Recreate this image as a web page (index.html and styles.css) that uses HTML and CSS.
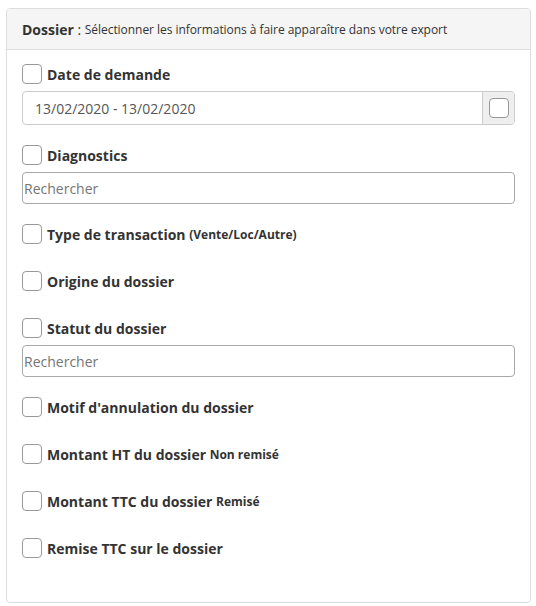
FILE: index.html
```html
<!DOCTYPE html>
<html lang="fr">
<head>
<meta charset="utf-8">
<title>Dossier</title>
<link rel="stylesheet" href="styles.css">
</head>
<body>
<div class="panel">
  <div class="panel-heading"><b>Dossier</b> : <span class="sub">Sélectionner les informations à faire apparaître dans votre export</span></div>
  <div class="panel-body">
    <div class="group">
      <label class="check"><span class="box"></span>Date de demande</label>
      <div class="date-input"><span class="date-val">13/02/2020 - 13/02/2020</span><span class="addon"><span class="box"></span></span></div>
    </div>
    <div class="group">
      <label class="check"><span class="box"></span>Diagnostics</label>
      <div class="search">Rechercher</div>
    </div>
    <div class="group">
      <label class="check"><span class="box"></span>Type de transaction <small>(Vente/Loc/Autre)</small></label>
    </div>
    <div class="group">
      <label class="check"><span class="box"></span>Origine du dossier</label>
    </div>
    <div class="group">
      <label class="check"><span class="box"></span>Statut du dossier</label>
      <div class="search">Rechercher</div>
    </div>
    <div class="group">
      <label class="check"><span class="box"></span>Motif d'annulation du dossier</label>
    </div>
    <div class="group">
      <label class="check"><span class="box"></span>Montant HT du dossier <small>Non remisé</small></label>
    </div>
    <div class="group">
      <label class="check"><span class="box"></span>Montant TTC du dossier <small>Remisé</small></label>
    </div>
    <div class="group last">
      <label class="check"><span class="box"></span>Remise TTC sur le dossier</label>
    </div>
  </div>
</div>
</body>
</html>
```
FILE: styles.css
```css
* { box-sizing: border-box; }
html, body { margin: 0; background: #fff; }
body {
  font-family: "Open Sans", "Liberation Sans", sans-serif;
  color: #333;
  padding: 8px 5px 0 6px;
}
.panel {
  width: 525px;
  height: 595px;
  border: 1px solid #ddd;
  border-radius: 4px;
  background: #fff;
}
.panel-heading {
  height: 41px;
  background: #f5f5f5;
  border-bottom: 1px solid #ddd;
  border-radius: 3px 3px 0 0;
  padding: 0 15px;
  display: flex;
  align-items: center;
  font-size: 14px;
  white-space: pre;
}
.panel-heading b { font-weight: 700; }
.panel-heading .sub { font-size: 12px; letter-spacing: -0.05px; }
.panel-body {
  padding: 14px 15px 17px;
}
.group { display: flow-root; margin-bottom: 20px; }
.group.last { margin-bottom: 0; }
.check {
  display: flex;
  align-items: center;
  height: 20px;
  margin-bottom: 7px;
  font-size: 14px;
  font-weight: 700;
  color: #333;
  white-space: pre;
}
.check small {
  font-size: 12px;
  font-weight: 700;
}
.box {
  display: inline-block;
  width: 20px;
  height: 20px;
  border: 1px solid #999;
  border-radius: 4px;
  background: #fff;
  margin-right: 5px;
  flex: none;
}
.date-input {
  display: flex;
  height: 34px;
  border: 1px solid #ccc;
  border-radius: 4px;
  overflow: hidden;
}
.date-val {
  flex: 1;
  display: flex;
  align-items: center;
  padding-left: 12px;
  font-size: 14px;
  color: #555;
}
.addon {
  width: 32px;
  background: #eee;
  border-left: 1px solid #ccc;
  display: flex;
  align-items: center;
  justify-content: center;
}
.addon .box { margin: 0; }
.search {
  height: 32px;
  border: 1px solid #a9a9a9;
  border-radius: 4px;
  display: flex;
  align-items: center;
  padding-left: 1px;
  font-size: 14px;
  color: #757575;
  width: 493px;
}
```
